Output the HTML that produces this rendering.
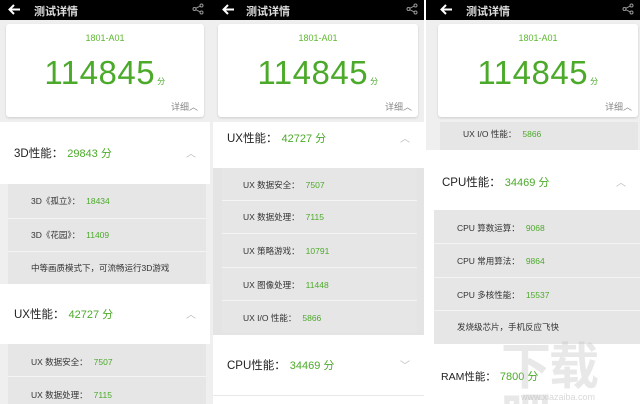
<!DOCTYPE html>
<html><head><meta charset="utf-8"><style>
*{margin:0;padding:0;box-sizing:border-box}
body{width:640px;height:404px;overflow:hidden;background:#fff;font-family:"Liberation Sans","Noto Sans CJK SC",sans-serif;position:relative}
.p{position:absolute;top:0;height:404px;overflow:hidden;background:#efefef}
.hd{position:absolute;left:0;right:0;top:0;height:20px;background:#000;color:#fff}
.hd .ar{position:absolute;left:8px;top:4px}
.hd .t{position:absolute;left:34px;top:3px;font-size:11px;font-weight:bold;color:#ddd}
.hd .sv{position:absolute;right:6px;top:3px}
.card{position:absolute;left:6px;right:6px;top:24px;height:93px;background:#fff;border-radius:3px;box-shadow:0 1px 2px #ccc;text-align:center}
.card .m{position:absolute;left:0;right:0;top:9px;font-size:9px;color:#5cb82e}
.card .s{position:absolute;left:0;right:0;top:30px;font-size:33px;color:#4caa2a;letter-spacing:0.5px}
.card .s small{font-size:8px;margin-left:2px}
.card .d{position:absolute;right:6px;top:76px;font-size:9px;color:#888}
.w{position:absolute;left:0;right:0;background:#fff}
.sh{position:absolute;font-size:11.5px;color:#222}
.sh b{font-weight:normal;color:#4caa2a;font-size:11px;margin-left:4px}
.car{position:absolute;right:14px;font-size:10px;color:#bbb}
.g{position:absolute;background:#e6e6e6}
.r{position:absolute;font-size:8.5px;color:#333}
.r b{font-weight:normal;color:#4caa2a;margin-left:6px}
.ln{position:absolute;height:1px;background:#f4f4f4}
</style></head><body>

<!-- Panel 1 -->
<div class="p" style="left:0;width:210px">
<div class="hd"><svg class="ar" width="13" height="11" viewBox="0 0 13 11" fill="none" stroke="#fff" stroke-width="2"><path d="M12 5.5H2M6 1L1.5 5.5L6 10"/></svg><span class="t">测试详情</span>
<svg class="sv" width="12" height="12" viewBox="0 0 12 12" fill="none" stroke="#999" stroke-width="1"><circle cx="9.5" cy="2.5" r="1.5"/><circle cx="2.5" cy="6" r="1.5"/><circle cx="9.5" cy="9.5" r="1.5"/><path d="M4 5.2L8 3.2M4 6.8L8 8.8"/></svg></div>
<div class="card"><div class="m">1801-A01</div><div class="s">114845<small>分</small></div><div class="d">详细︿</div></div>
<div class="w" style="top:122px;height:62px"></div>
<div class="sh" style="left:14px;top:145px">3D性能：<b>29843 分</b></div><div class="car" style="top:145px">︿</div>
<div class="g" style="left:8px;width:198px;top:184px;height:100px"></div>
<div class="ln" style="left:8px;width:198px;top:218px"></div><div class="ln" style="left:8px;width:198px;top:251px"></div>
<div class="r" style="left:31px;top:195px">3D《孤立》：<b>18434</b></div>
<div class="r" style="left:31px;top:229px">3D《花园》：<b>11409</b></div>
<div class="r" style="left:31px;top:262px">中等画质模式下，可流畅运行3D游戏</div>
<div class="w" style="top:284px;height:60px"></div>
<div class="sh" style="left:14px;top:306px">UX性能：<b>42727 分</b></div><div class="car" style="top:306px">︿</div>
<div class="g" style="left:8px;width:198px;top:344px;height:60px"></div>
<div class="ln" style="left:8px;width:198px;top:376px"></div>
<div class="r" style="left:31px;top:356px">UX 数据安全：<b>7507</b></div>
<div class="r" style="left:31px;top:389px">UX 数据处理：<b>7115</b></div>
</div>

<!-- Panel 2 -->
<div class="p" style="left:210px;width:214px">
<div class="hd"><svg class="ar" style="left:12px" width="13" height="11" viewBox="0 0 13 11" fill="none" stroke="#fff" stroke-width="2"><path d="M12 5.5H2M6 1L1.5 5.5L6 10"/></svg><span class="t" style="left:36px">测试详情</span>
<svg class="sv" width="12" height="12" viewBox="0 0 12 12" fill="none" stroke="#999" stroke-width="1"><circle cx="9.5" cy="2.5" r="1.5"/><circle cx="2.5" cy="6" r="1.5"/><circle cx="9.5" cy="9.5" r="1.5"/><path d="M4 5.2L8 3.2M4 6.8L8 8.8"/></svg></div>
<div class="card" style="left:8px"><div class="m">1801-A01</div><div class="s">114845<small>分</small></div><div class="d">详细︿</div></div>
<div class="w" style="top:122px;height:47px;left:3px"></div>
<div class="sh" style="left:17px;top:130px">UX性能：<b>42727 分</b></div><div class="car" style="top:130px">︿</div>
<div class="g" style="left:3px;right:0;top:168px;height:167px;background:#e4e4e4"></div>
<div class="g" style="left:12px;width:195px;top:168px;height:165px"></div>
<div class="ln" style="left:12px;width:195px;top:200px"></div><div class="ln" style="left:12px;width:195px;top:233px"></div><div class="ln" style="left:12px;width:195px;top:267px"></div><div class="ln" style="left:12px;width:195px;top:300px"></div>
<div class="r" style="left:33px;top:179px">UX 数据安全：<b>7507</b></div>
<div class="r" style="left:33px;top:211px">UX 数据处理：<b>7115</b></div>
<div class="r" style="left:33px;top:245px">UX 策略游戏：<b>10791</b></div>
<div class="r" style="left:33px;top:279px">UX 图像处理：<b>11448</b></div>
<div class="r" style="left:33px;top:312px">UX I/O 性能：<b>5866</b></div>
<div class="w" style="top:335px;height:69px;left:3px"></div>
<div class="sh" style="left:17px;top:357px">CPU性能：<b>34469 分</b></div><div class="car" style="top:357px">﹀</div>
<div class="ln" style="left:3px;right:0;top:395px;background:#e8e8e8"></div>
</div>

<!-- Panel 3 -->
<div class="p" style="left:426px;width:214px;background:#fff">
<div class="hd"><svg class="ar" style="left:14px" width="13" height="11" viewBox="0 0 13 11" fill="none" stroke="#fff" stroke-width="2"><path d="M12 5.5H2M6 1L1.5 5.5L6 10"/></svg><span class="t" style="left:40px">测试详情</span>
<svg class="sv" width="12" height="12" viewBox="0 0 12 12" fill="none" stroke="#999" stroke-width="1"><circle cx="9.5" cy="2.5" r="1.5"/><circle cx="2.5" cy="6" r="1.5"/><circle cx="9.5" cy="9.5" r="1.5"/><path d="M4 5.2L8 3.2M4 6.8L8 8.8"/></svg></div>
<div class="g" style="left:0;right:0;top:20px;height:130px;background:#efefef"></div>
<div class="card" style="left:12px;right:2px"><div class="m">1801-A01</div><div class="s">114845<small>分</small></div><div class="d">详细︿</div></div>
<div class="g" style="left:14px;right:2px;top:122px;height:28px"></div>
<div class="r" style="left:37px;top:128px">UX I/O 性能：<b>5866</b></div>
<div class="sh" style="left:16px;top:174px">CPU性能：<b>34469 分</b></div><div class="car" style="top:174px">︿</div>
<div class="g" style="left:8px;right:0;top:210px;height:134px"></div>
<div class="ln" style="left:8px;right:0;top:243px"></div><div class="ln" style="left:8px;right:0;top:277px"></div><div class="ln" style="left:8px;right:0;top:310px"></div>
<div class="r" style="left:31px;top:222px">CPU 算数运算：<b>9068</b></div>
<div class="r" style="left:31px;top:255px">CPU 常用算法：<b>9864</b></div>
<div class="r" style="left:31px;top:289px">CPU 多核性能：<b>15537</b></div>
<div class="r" style="left:31px;top:321px">发烧级芯片，手机反应飞快</div>
<div class="sh" style="left:15px;top:368px;font-size:10.5px">RAM性能：<b>7800 分</b></div>
<div style="position:absolute;left:75px;top:342px;font-size:50px;line-height:50px;color:rgba(190,190,190,0.35);font-weight:bold;letter-spacing:-2px">下载吧</div>
<div style="position:absolute;left:95px;top:392px;font-size:9px;line-height:10px;color:rgba(180,180,180,0.5)">www.xiazaiba.com</div>
</div>
</body></html>
